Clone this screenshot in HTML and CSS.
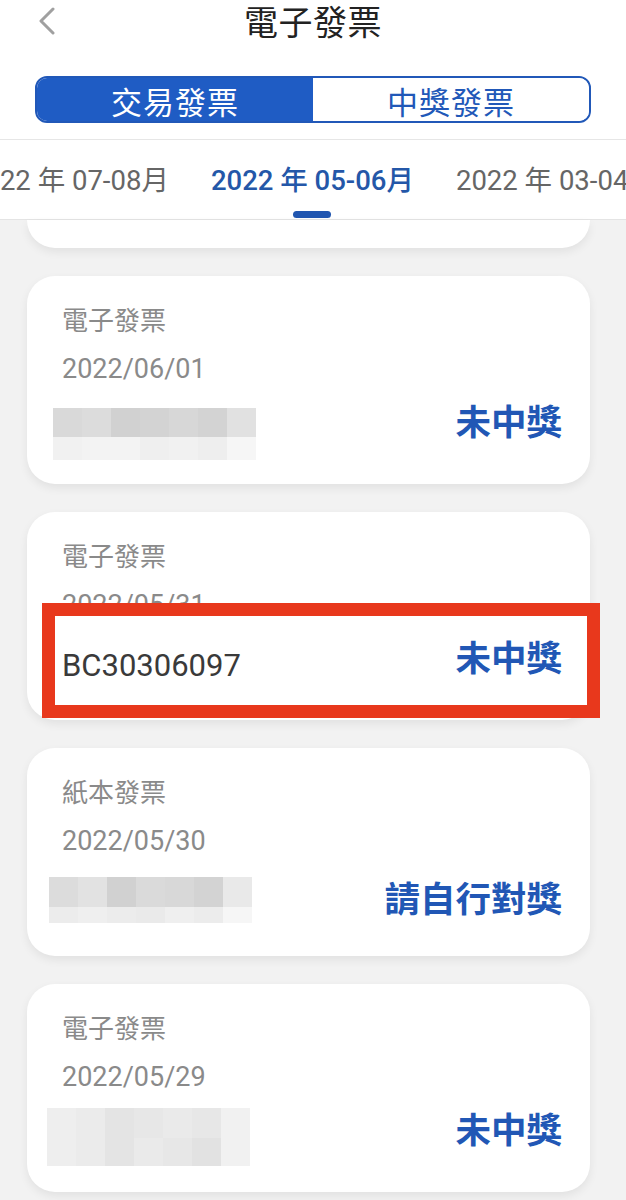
FILE: index.html
```html
<!DOCTYPE html>
<html lang="zh-Hant">
<head>
<meta charset="utf-8">
<title>電子發票</title>
<link rel="stylesheet" href="styles.css">
</head>
<body>
<div class="app">
  <header class="header">
    <div class="title-row">
      <div class="back">
        <svg width="22" height="28" viewBox="0 0 22 28"><polyline points="17,2 5,14 17,26" fill="none" stroke="#a0a0a0" stroke-width="3" stroke-linecap="round" stroke-linejoin="round"/></svg>
      </div>
      <h1 class="title">電子發票</h1>
      <div></div>
    </div>
    <div class="segment">
      <div class="seg seg-active">交易發票</div>
      <div class="seg">中獎發票</div>
    </div>
  </header>

  <nav class="tabs">
    <div class="tab-track">
      <div class="tab">2022 年 07-08月</div>
      <div class="tab tab-active">2022 年 05-06月<span class="indicator"></span></div>
      <div class="tab">2022 年 03-04月</div>
    </div>
  </nav>

  <main class="list">
    <div class="card card-tail"></div>

    <div class="card">
      <div class="label">電子發票</div>
      <div class="date">2022/06/01</div>
      <div class="row">
        <div class="mosaic mosaic-a">
          <span class="c g1"></span><span class="c g2"></span><span class="c g3"></span><span class="c g4"></span><span class="c g5"></span><span class="c g6"></span><span class="c g7"></span>
          <span class="c l1"></span><span class="c l2"></span><span class="c l2"></span><span class="c l3"></span><span class="c l1"></span><span class="c l4"></span><span class="c l5"></span>
        </div>
        <div class="prize">未中獎</div>
      </div>
    </div>

    <div class="card card-marked">
      <div class="label">電子發票</div>
      <div class="date">2022/05/31</div>
      <div class="highlight"></div>
      <div class="row row-top">
        <div class="number">BC30306097</div>
        <div class="prize">未中獎</div>
      </div>
    </div>

    <div class="card">
      <div class="label">紙本發票</div>
      <div class="date">2022/05/30</div>
      <div class="row">
        <div class="mosaic mosaic-b">
          <span class="c h1"></span><span class="c h2"></span><span class="c g3"></span><span class="c h3"></span><span class="c h4"></span><span class="c g6"></span><span class="c h5"></span>
          <span class="c k1"></span><span class="c k2"></span><span class="c k1"></span><span class="c k3"></span><span class="c k2"></span><span class="c k1"></span><span class="c l5"></span>
        </div>
        <div class="prize prize-paper">請自行對獎</div>
      </div>
    </div>

    <div class="card">
      <div class="label">電子發票</div>
      <div class="date">2022/05/29</div>
      <div class="row">
        <div class="mosaic mosaic-c">
          <span class="c p1"></span><span class="c p2"></span><span class="c p3"></span><span class="c p4"></span><span class="c p5"></span><span class="c p4"></span><span class="c p6"></span>
          <span class="c p1"></span><span class="c p2"></span><span class="c p3"></span><span class="c p5"></span><span class="c p4"></span><span class="c p7"></span><span class="c p6"></span>
        </div>
        <div class="prize">未中獎</div>
      </div>
    </div>
  </main>
</div>
</body>
</html>
```

FILE: styles.css
```css
* { box-sizing: border-box; margin: 0; padding: 0; }

html, body {
  width: 626px;
  height: 1200px;
  overflow: hidden;
  background: #f2f2f2;
}

body {
  font-family: Roboto, "Noto Sans CJK TC", sans-serif;
}

.app {
  width: 626px;
  height: 1200px;
  overflow: hidden;
  background: #f2f2f2;
}

/* header */
.header {
  background: #ffffff;
  height: 140px;
  border-bottom: 1px solid #e6e6e6;
}

.title-row {
  display: grid;
  grid-template-columns: 1fr auto 1fr;
  align-items: center;
  height: 42px;
}

.back {
  padding-left: 36px;
  display: flex;
  align-items: center;
  height: 42px;
}

.title {
  font-family: "Noto Sans CJK TC", sans-serif;
  font-weight: 400;
  font-size: 34px;
  line-height: 42px;
  color: #222222;
  letter-spacing: 0.5px;
}

.segment {
  display: grid;
  grid-template-columns: 1fr 1fr;
  margin: 34px 35px 0 35px;
  height: 47px;
  border: 2px solid #2158b8;
  border-radius: 12px;
  overflow: hidden;
}

.seg {
  display: flex;
  align-items: center;
  justify-content: center;
  font-family: "Noto Sans CJK TC", sans-serif;
  font-size: 31px;
  color: #2158b8;
  background: #ffffff;
  letter-spacing: 1px;
}

.seg-active {
  background: #1f5cc4;
  color: #ffffff;
}

/* tabs */
.tabs {
  background: #ffffff;
  height: 80px;
  border-bottom: 1px solid #e4e4e4;
  overflow: hidden;
}

.tab-track {
  display: flex;
  gap: 42px;
  margin-left: -31px;
  padding-top: 24px;
  white-space: nowrap;
}

.tab {
  display: flex;
  flex-direction: column;
  align-items: center;
  font-size: 27.5px;
  line-height: 34px;
  color: #666666;
  flex: none;
}

.tab-active {
  color: #2457a8;
  font-weight: 500;
}

.indicator {
  display: block;
  width: 38px;
  height: 7px;
  margin-top: 13px;
  border-radius: 4px;
  background: #2156b0;
}

/* list */
.list {
  display: flex;
  flex-direction: column;
  gap: 28px;
  padding: 0 36px 0 27px;
}

.card {
  position: relative;
  background: #ffffff;
  border-radius: 28px;
  padding: 18px 28px 28px 35px;
  box-shadow: 0 4px 10px rgba(0, 0, 0, 0.07);
}

.card-tail {
  height: 28px;
  padding: 0;
  border-radius: 0 0 28px 28px;
}

.label {
  font-family: "Noto Sans CJK TC", sans-serif;
  font-size: 26px;
  line-height: 50px;
  color: #8a8a8a;
}

.date {
  font-size: 27px;
  line-height: 50px;
  color: #8a8a8a;
}

.row {
  display: flex;
  align-items: center;
  justify-content: space-between;
  height: 62px;
}

.row-top {
  position: relative;
  z-index: 2;
}

.number {
  font-size: 31px;
  color: #3a3a3a;
  margin-top: 8px;
}

.prize {
  font-family: "Noto Sans CJK TC", sans-serif;
  font-weight: 700;
  font-size: 35.5px;
  color: #2157b5;
  margin-bottom: 12px;
}

.prize-paper {
  margin-bottom: 2px;
}

/* mosaic placeholder for blurred numbers */
.mosaic {
  display: grid;
  grid-template-columns: repeat(7, 29px);
  margin-left: -9px;
}

.mosaic-a { grid-template-rows: 29px 23px; margin-top: 18px; }
.mosaic-b { grid-template-rows: 30px 16px; margin-left: -13px; margin-top: 6px; }
.mosaic-c { grid-template-rows: 30px 28px; margin-left: -15px; margin-top: 8px; }

.c { display: block; }
.g1 { background: #d9d9d9; }
.g2 { background: #dcdcdc; }
.g3 { background: #d1d1d1; }
.g4 { background: #d3d3d3; }
.g5 { background: #d7d7d7; }
.g6 { background: #d3d3d3; }
.g7 { background: #e1e1e1; }
.l1 { background: #f1f1f1; }
.l2 { background: #f3f3f3; }
.l3 { background: #efefef; }
.l4 { background: #eeeeee; }
.l5 { background: #f6f6f6; }
.h1 { background: #dcdcdc; }
.h2 { background: #e2e2e2; }
.h3 { background: #dadada; }
.h4 { background: #d8d8d8; }
.h5 { background: #e9e9e9; }
.k1 { background: #ececec; }
.k2 { background: #efefef; }
.k3 { background: #eaeaea; }
.p1 { background: #eeeeee; }
.p2 { background: #ebebeb; }
.p3 { background: #e4e4e4; }
.p4 { background: #e7e7e7; }
.p5 { background: #eaeaea; }
.p6 { background: #f1f1f1; }
.p7 { background: #e2e2e2; }

/* red annotation frame */
.highlight {
  position: absolute;
  left: 15px;
  top: 91px;
  width: 558px;
  height: 115px;
  border: 13px solid #e8381c;
  background: #ffffff;
  z-index: 1;
}
```
